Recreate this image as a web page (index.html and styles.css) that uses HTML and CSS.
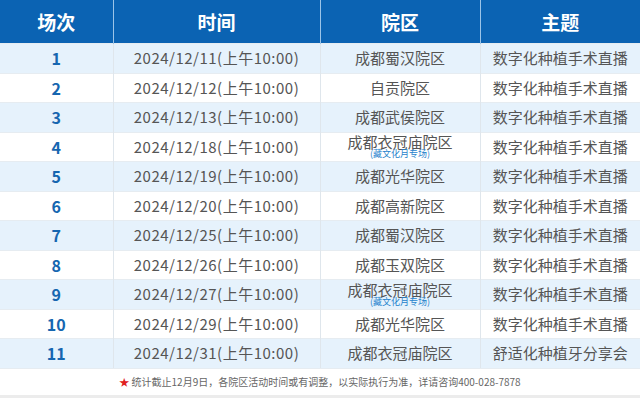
FILE: index.html
```html
<!DOCTYPE html>
<html lang="zh-CN">

<head>
    <meta charset="UTF-8">
    <meta name="viewport" content="width=device-width, initial-scale=1.0">
    <title>种植手术直播场次</title>
    <link rel="stylesheet" href="styles.css">
</head>

<body>

    <div class="schedule">
        <table class="schedule-table">
            <colgroup>
                <col class="col-no">
                <col class="col-time">
                <col class="col-place">
                <col class="col-topic">
            </colgroup>
            <thead>
                <tr>
                    <th>场次</th>
                    <th>时间</th>
                    <th>院区</th>
                    <th>主题</th>
                </tr>
            </thead>
            <tbody>
                <tr>
                    <td class="no">1</td>
                    <td class="time">2024/12/11(上午10:00)</td>
                    <td>成都蜀汉院区</td>
                    <td>数字化种植手术直播</td>
                </tr>
                <tr>
                    <td class="no">2</td>
                    <td class="time">2024/12/12(上午10:00)</td>
                    <td>自贡院区</td>
                    <td>数字化种植手术直播</td>
                </tr>
                <tr>
                    <td class="no">3</td>
                    <td class="time">2024/12/13(上午10:00)</td>
                    <td>成都武侯院区</td>
                    <td>数字化种植手术直播</td>
                </tr>
                <tr>
                    <td class="no">4</td>
                    <td class="time">2024/12/18(上午10:00)</td>
                    <td class="two-line"><span class="main">成都衣冠庙院区</span><span class="tag">(藏文化月专场)</span></td>
                    <td>数字化种植手术直播</td>
                </tr>
                <tr>
                    <td class="no">5</td>
                    <td class="time">2024/12/19(上午10:00)</td>
                    <td>成都光华院区</td>
                    <td>数字化种植手术直播</td>
                </tr>
                <tr>
                    <td class="no">6</td>
                    <td class="time">2024/12/20(上午10:00)</td>
                    <td>成都高新院区</td>
                    <td>数字化种植手术直播</td>
                </tr>
                <tr>
                    <td class="no">7</td>
                    <td class="time">2024/12/25(上午10:00)</td>
                    <td>成都蜀汉院区</td>
                    <td>数字化种植手术直播</td>
                </tr>
                <tr>
                    <td class="no">8</td>
                    <td class="time">2024/12/26(上午10:00)</td>
                    <td>成都玉双院区</td>
                    <td>数字化种植手术直播</td>
                </tr>
                <tr>
                    <td class="no">9</td>
                    <td class="time">2024/12/27(上午10:00)</td>
                    <td class="two-line"><span class="main">成都衣冠庙院区</span><span class="tag">(藏文化月专场)</span></td>
                    <td>数字化种植手术直播</td>
                </tr>
                <tr>
                    <td class="no">10</td>
                    <td class="time">2024/12/29(上午10:00)</td>
                    <td>成都光华院区</td>
                    <td>数字化种植手术直播</td>
                </tr>
                <tr>
                    <td class="no">11</td>
                    <td class="time">2024/12/31(上午10:00)</td>
                    <td>成都衣冠庙院区</td>
                    <td>舒适化种植牙分享会</td>
                </tr>
            </tbody>
        </table>

        <!-- 备注 -->
        <p class="note"><span class="star">★</span> 统计截止12月9日，各院区活动时间或有调整，以实际执行为准，详请咨询400-028-7878</p>
    </div>

</body>

</html>
```

FILE: styles.css
```css
/* 基础 */
body {
    margin: 0;
    width: 640px;
    height: 398px;
    overflow: hidden;
    background-color: #ececec;
    font-family: "Noto Sans CJK SC", "Noto Sans", sans-serif;
    color: #555;
}

.schedule {
    background-color: #fff;
}

/* 表格 */
.schedule-table {
    width: 640px;
    border-collapse: collapse;
    table-layout: fixed;
}

.col-no {
    width: 113px;
}

.col-time {
    width: 207px;
}

.col-place {
    width: 160px;
}

.col-topic {
    width: 160px;
}

.schedule-table th {
    height: 43px;
    padding: 0;
    background-color: #0b63b3;
    color: #fff;
    font-size: 19px;
    font-weight: bold;
    border-left: 1px solid #9cc4e8;
}

.schedule-table th:first-child,
.schedule-table td:first-child {
    border-left: none;
}

.schedule-table td {
    height: 28.5px;
    padding: 0;
    text-align: center;
    font-size: 15px;
    line-height: 18px;
    border-left: 1px solid #dfe6ec;
    border-top: 1px solid #e6ecf1;
}

.schedule-table tbody tr:nth-child(odd) {
    background-color: #e6f2fc;
}

.schedule-table td.no {
    color: #1666b0;
    font-weight: bold;
    font-size: 16px;
}

.schedule-table td.time {
    letter-spacing: 0.5px;
}

/* 两行院区 */
.two-line .main {
    display: block;
    line-height: 15px;
}

.tag {
    display: block;
    font-size: 9px;
    line-height: 10px;
    color: #1f82cc;
}

/* 备注 */
.note {
    margin: 0;
    height: 26px;
    line-height: 26px;
    text-align: center;
    font-size: 10px;
    color: #666;
    border-top: 1px solid #e6ecf1;
}

.star {
    color: #e02020;
}
```
